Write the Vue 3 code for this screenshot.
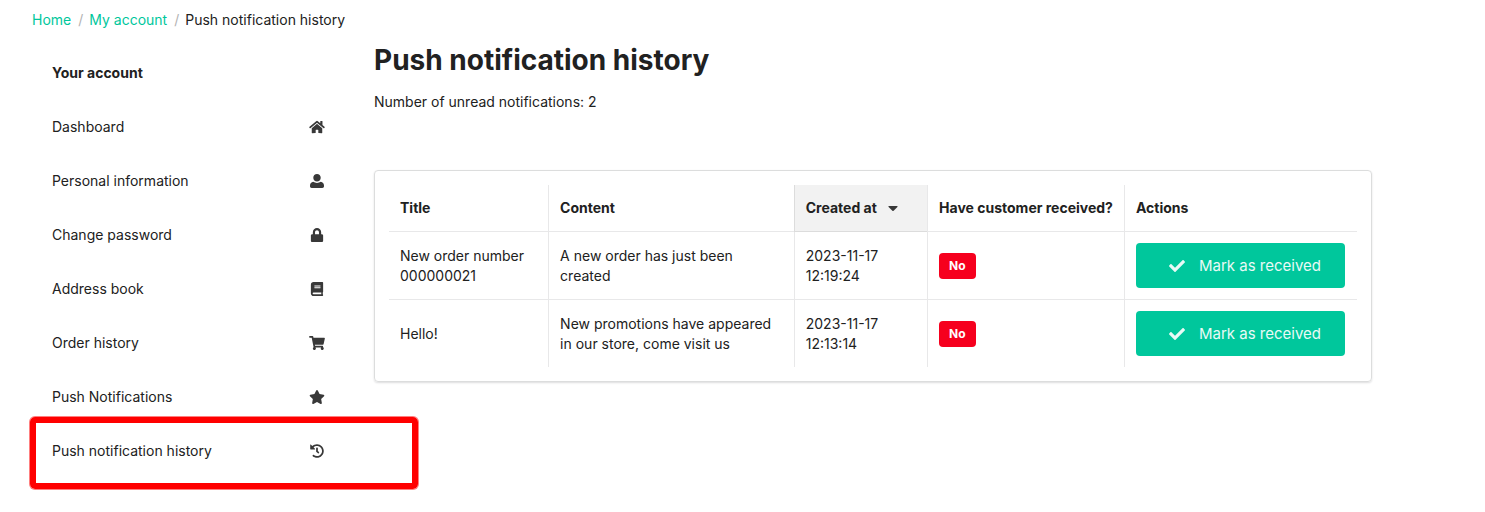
<script setup>
const menu = [
  { label: 'Dashboard', w: 576, icon: 'M280.37 148.26L96 300.11V464a16 16 0 0 0 16 16l112.06-.29a16 16 0 0 0 15.92-16V368a16 16 0 0 1 16-16h64a16 16 0 0 1 16 16v95.64a16 16 0 0 0 16 16.05L464 480a16 16 0 0 0 16-16V300L295.67 148.26a12.19 12.19 0 0 0-15.3 0zM571.6 251.47L488 182.56V44.05a12 12 0 0 0-12-12h-56a12 12 0 0 0-12 12v72.61L318.47 43a48 48 0 0 0-61 0L4.34 251.47a12 12 0 0 0-1.6 16.9l25.5 31A12 12 0 0 0 45.15 301l235.22-193.74a12.19 12.19 0 0 1 15.3 0L530.9 301a12 12 0 0 0 16.9-1.6l25.5-31a12 12 0 0 0-1.7-16.93z' },
  { label: 'Personal information', w: 512, icon: 'M256 0c79.500 0 136 60 136 134s-56.500 138-136 138-136-64-136-138S176.500 0 256 0zM118 284c38 28 85 42 138 42s100-14 138-42c66 8 118 60 118 132v36c0 34-26 60-60 60H60c-34 0-60-26-60-60v-36c0-72 52-124 118-132z' },
  { label: 'Change password', w: 448, icon: 'M400 224h-24v-72C376 68.200 307.800 0 224 0S72 68.200 72 152v72H48c-26.500 0-48 21.500-48 48v192c0 26.500 21.500 48 48 48h352c26.500 0 48-21.500 48-48V272c0-26.500-21.500-48-48-48zm-104 0H152v-72c0-39.700 32.300-72 72-72s72 32.300 72 72v72z' },
  { label: 'Address book', w: 448, icon: 'M448 360V24c0-13.300-10.700-24-24-24H96C43 0 0 43 0 96v320c0 53 43 96 96 96h328c13.300 0 24-10.700 24-24v-16c0-7.500-3.500-14.300-8.900-18.700-4.200-15.400-4.200-59.300 0-74.700 5.400-4.300 8.900-11.100 8.900-18.600zM128 134c0-3.300 2.700-6 6-6h212c3.300 0 6 2.700 6 6v20c0 3.300-2.700 6-6 6H134c-3.300 0-6-2.700-6-6v-20zm0 64c0-3.300 2.700-6 6-6h212c3.300 0 6 2.700 6 6v20c0 3.300-2.700 6-6 6H134c-3.300 0-6-2.700-6-6v-20zm253.400 250H96c-17.700 0-32-14.300-32-32 0-17.600 14.400-32 32-32h285.400c-1.900 17.100-1.900 46.900 0 64z' },
  { label: 'Order history', w: 576, icon: 'M528.12 301.319l47.273-208C578.806 78.301 567.391 64 551.990 64H159.208l-9.166-44.810C147.758 8.021 137.930 0 126.529 0H24C10.745 0 0 10.745 0 24v16c0 13.255 10.745 24 24 24h69.883l70.248 343.435C147.325 417.100 136 435.222 136 456c0 30.928 25.072 56 56 56s56-25.072 56-56c0-15.674-6.447-29.835-16.824-40h209.647C430.447 426.165 424 440.326 424 456c0 30.928 25.072 56 56 56s56-25.072 56-56c0-22.172-12.888-41.332-31.579-50.405l5.517-24.276c3.413-15.018-8.002-29.319-23.403-29.319H218.117l-6.545-32h293.145c11.206 0 20.920-7.754 23.403-18.681z' },
  { label: 'Push Notifications', w: 576, icon: 'M259.300 17.800L194 150.200 47.900 171.500c-26.200 3.800-36.700 36.100-17.700 54.600l105.700 103-25 145.500c-4.500 26.300 23.200 46 46.400 33.700L288 439.600l130.700 68.700c23.200 12.200 50.900-7.400 46.400-33.700l-25-145.500 105.700-103c19-18.500 8.500-50.800-17.700-54.600L382 150.200 316.700 17.800c-11.700-23.600-45.600-23.900-57.400 0z' },
  { label: 'Push notification history', w: 512, marked: true, icon: 'M504 255.531c.253 136.640-111.180 248.372-247.820 248.468-59.015.042-113.223-20.530-155.822-54.911-11.077-8.940-11.905-25.541-1.839-35.607l11.267-11.267c8.609-8.609 22.353-9.551 31.891-1.984C173.062 425.135 212.781 440 256 440c101.705 0 184-82.311 184-184 0-101.705-82.311-184-184-184-48.814 0-93.149 18.969-126.068 49.932l50.754 50.754c10.080 10.080 2.941 27.314-11.313 27.314H24c-8.837 0-16-7.163-16-16V38.627c0-14.254 17.234-21.393 27.314-11.314l49.372 49.372C129.209 34.136 189.552 8 256 8c136.810 0 247.747 110.780 248 247.531zm-180.912 78.784l9.823-12.630c8.138-10.463 6.253-25.542-4.210-33.679L288 256.349V152c0-13.255-10.745-24-24-24h-16c-13.255 0-24 10.745-24 24v135.651l65.409 50.874c10.463 8.137 25.541 6.253 33.679-4.210z' },
]
const rows = [
  { title: 'New order number 000000021', content: 'A new order has just been created', date: '2023-11-17 12:19:24' },
  { title: 'Hello!', content: 'New promotions have appeared in our store, come visit us', date: '2023-11-17 12:13:14' },
]
</script>

<template>
  <div class="page">
    <nav class="breadcrumb" aria-label="Breadcrumb">
      <a href="#">Home</a>
      <span class="divider">/</span>
      <a href="#">My account</a>
      <span class="divider">/</span>
      <span>Push notification history</span>
    </nav>

    <div class="columns">
      <nav class="sidebar" aria-label="Your account">
        <div class="item heading">Your account</div>
        <a v-for="m in menu" :key="m.label" href="#" class="item" :class="{ marked: m.marked }">
          <span>{{ m.label }}</span>
          <svg class="icon" :viewBox="`0 0 ${m.w} 512`" aria-hidden="true"><path :d="m.icon" /></svg>
        </a>
      </nav>

      <main class="main">
        <h1>Push notification history</h1>
        <p>Number of unread notifications: 2</p>

        <section class="card">
          <table>
            <thead>
              <tr>
                <th>Title</th>
                <th>Content</th>
                <th class="sorted" aria-sort="descending">
                  <a href="#">Created at<svg class="caret" viewBox="0 0 10 6" aria-hidden="true"><path d="M1 0h8q1 0 .4.900L5.600 4.700q-.6.600-1.200 0L.6.900Q0 0 1 0z" /></svg></a>
                </th>
                <th>Have customer received?</th>
                <th>Actions</th>
              </tr>
            </thead>
            <tbody>
              <tr v-for="r in rows" :key="r.date">
                <td>{{ r.title }}</td>
                <td>{{ r.content }}</td>
                <td>{{ r.date }}</td>
                <td><span class="label">No</span></td>
                <td>
                  <button type="button">
                    <svg class="check" viewBox="0 0 512 512" aria-hidden="true"><path d="M173.898 439.404l-166.400-166.400c-9.997-9.997-9.997-26.206 0-36.204l36.203-36.204c9.997-9.998 26.207-9.998 36.204 0L192 312.690 432.095 72.596c9.997-9.997 26.207-9.997 36.204 0l36.203 36.204c9.997 9.997 9.997 26.206 0 36.204l-294.400 294.401c-9.998 9.997-26.207 9.997-36.204-.001z" /></svg>
                    <span>Mark as received</span>
                  </button>
                </td>
              </tr>
            </tbody>
          </table>
        </section>
      </main>
    </div>
  </div>
</template>

<style>
body {
  margin: 0;
  background: #fff;
}
</style>

<style scoped>
.page {
  max-width: 1340px;
  margin: 0 32px;
  padding: 10px 0 32px;
  font-family: Inter, "Liberation Sans", sans-serif;
  font-size: 14px;
  line-height: 20px;
  color: #212121;
}
a {
  color: inherit;
  text-decoration: none;
}
svg {
  fill: currentColor;
}
.breadcrumb {
  display: flex;
}
.breadcrumb a {
  color: #00c79c;
}
.divider {
  margin: 0 6px 0 7px;
  color: #b3b3b3;
}
.columns {
  display: grid;
  grid-template-columns: 1fr 3fr;
  margin: 16px -14px 0;
}
.sidebar,
.main {
  min-width: 0;
  padding: 0 14px;
}
.item {
  position: relative;
  display: flex;
  align-items: center;
  justify-content: space-between;
  height: 54px;
  padding: 0 21px 0 20px;
}
.heading {
  font-weight: 700;
}
.icon {
  width: 16px;
  height: 14px;
  color: #383838;
}
.marked::after {
  content: "";
  position: absolute;
  inset: -7px -72px -11px -2px;
  border: 6px solid #f00;
  border-radius: 5px;
  box-shadow: 0 0 0 1px rgba(255, 0, 0, 0.5);
  pointer-events: none;
}
h1 {
  margin: 0;
  font-size: 28px;
  line-height: 28px;
  font-weight: 700;
}
p {
  margin: 18px 0 58px;
}
.card {
  padding: 14px;
  border: 1px solid #dcdddd;
  border-radius: 4px;
  box-shadow: 0 1px 2px rgba(34, 36, 38, 0.15);
}
table {
  width: 100%;
  border-collapse: separate;
  border-spacing: 0;
}
th,
td {
  padding: 11px;
  border-left: 1px solid #e8e8e9;
  border-bottom: 1px solid #e8e8e9;
  text-align: left;
  vertical-align: middle;
}
th {
  padding: 13px 11px;
  font-weight: 700;
  white-space: nowrap;
}
th:first-child,
td:first-child {
  border-left: 0;
}
th:last-child,
td:last-child {
  padding-right: 12px;
}
tbody tr:last-child td {
  border-bottom: 0;
}
.sorted {
  background: #f2f2f2;
  border-color: #dcdcdc;
}
.caret {
  width: 10px;
  height: 6px;
  margin: 0 0 1px 11px;
  color: #383838;
}
.label {
  display: inline-block;
  padding: 3px 10px;
  border-radius: 4px;
  background: #f6001e;
  color: #fff;
  font-size: 12px;
  font-weight: 700;
  vertical-align: middle;
}
button {
  display: flex;
  align-items: center;
  gap: 14px;
  height: 45px;
  padding: 0 24px 0 33px;
  border: 0;
  border-radius: 4px;
  background: #00c79c;
  color: #e8faf6;
  font-family: inherit;
  font-size: 15px;
  line-height: 20px;
  white-space: nowrap;
}
.check {
  width: 16px;
  height: 16px;
}
</style>
